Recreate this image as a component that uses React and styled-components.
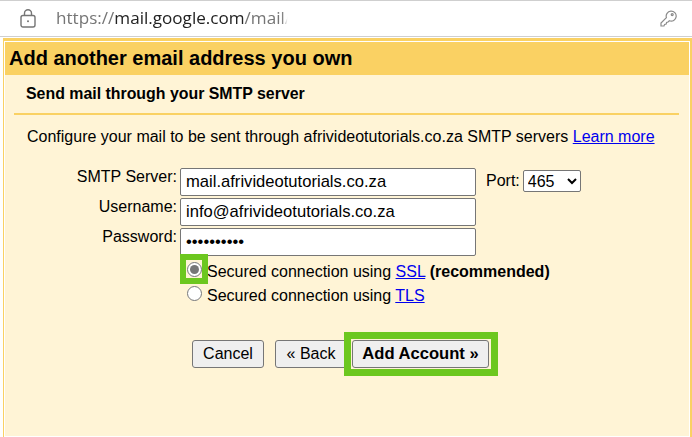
import styled, { createGlobalStyle } from "styled-components";

const Global = createGlobalStyle`
  html, body { margin: 0; padding: 0; background: #fff; }
  body { font-family: "Liberation Sans", Arial, sans-serif; color: #000; }
`;

const Page = styled.div`
  width: 692px;
  height: 437px;
  overflow: hidden;
  background: #fff;
`;

const AddressBar = styled.div`
  height: 35px;
  display: flex;
  align-items: center;
  border-top: 1px solid #cfcfcf;
  border-bottom: 1px solid #cfcfcf;
  padding: 0 15px 0 20px;
  color: #757575;
`;

const Url = styled.div`
  margin: 0 0 2px 20px;
  width: 234px;
  white-space: nowrap;
  overflow: hidden;
  font: 17.1px "Open Sans", sans-serif;
  color: #757575;
  -webkit-mask-image: linear-gradient(to right, #000 96.5%, transparent 99%);
  mask-image: linear-gradient(to right, #000 96.5%, transparent 99%);

  b { font-weight: 400; color: #222; }
`;

const KeyIcon = styled.svg`
  margin-left: auto;
`;

const Panel = styled.div`
  margin: 1px 0 0 3px;
  height: 399px;
  box-sizing: border-box;
  background: #fff4d6;
  border-style: solid;
  border-color: #fad163;
  border-width: 3px 2px 0 1px;
  box-shadow: inset 0 0 0 1px #fff;
  padding: 1px 1px 0;
`;

const Heading = styled.h1`
  margin: 0;
  height: 33px;
  padding-left: 4px;
  background: #fad163;
  font-size: 20px;
  line-height: 33px;
  font-weight: 700;
`;

const SubHeading = styled.h2`
  margin: 0 10px 0 9px;
  height: 38px;
  padding-left: 12px;
  border-bottom: 2px solid #fad163;
  font-size: 15.9px;
  line-height: 37px;
  font-weight: 700;
`;

const Intro = styled.p`
  margin: 12px 0 0 22px;
  font-size: 16px;
  line-height: 20px;

  a { color: #00e; }
`;

const Fields = styled.div`
  margin: 21px 0 0 0;
  display: grid;
  grid-template-columns: 172px 296px auto;
  column-gap: 3px;
  row-gap: 2px;
`;

const FieldLabel = styled.label`
  text-align: right;
  font-size: 16px;
  line-height: 18px;
`;

const TextInput = styled.input`
  box-sizing: border-box;
  width: 296px;
  height: 28px;
  padding: 0 5px;
  margin: 0;
  background: #fff;
  border: 1px solid #767676;
  border-radius: 2px;
  font: 16.6px "Liberation Sans", sans-serif;
  color: #000;
`;

const PortBox = styled.div`
  display: flex;
  align-items: center;
  gap: 3px;
  padding: 0 0 2px 7px;
  font-size: 16px;
`;

const PortSelect = styled.select`
  width: 58px;
  height: 22px;
  background: #fff;
  border: 1px solid #767676;
  border-radius: 2px;
  font: 16px "Liberation Sans", sans-serif;
  color: #000;
`;

const Options = styled.div`
  margin: 4px 0 0 175px;
  display: flex;
  flex-direction: column;
`;

const OptionRow = styled.label`
  display: flex;
  align-items: flex-start;
  height: 24px;
  font-size: 16px;
  line-height: 24px;

  a { color: #00e; }
`;

const RadioSpot = styled.span`
  position: relative;
  width: 15px;
  height: 15px;
  margin: 2px 5px 0 7px;
  display: flex;

  ${({ $marked }) => $marked && `
    &::after {
      content: "";
      position: absolute;
      left: -7px;
      top: -8px;
      width: 16px;
      height: 18px;
      border: 6px solid #6cc71f;
    }
  `}
`;

const Radio = styled.input`
  margin: 0;
  width: 15px;
  height: 15px;
  accent-color: #767676;
`;

const Actions = styled.div`
  margin: 32px 0 0 187px;
  display: flex;
`;

const Button = styled.button`
  box-sizing: border-box;
  height: 28px;
  padding: 0;
  width: ${({ $w }) => $w}px;
  margin-right: ${({ $gap }) => $gap}px;
  background: #efefef;
  border: 1px solid #767676;
  border-radius: 3px;
  font: ${({ $strong }) => ($strong ? "700 16.6px" : "400 16px")} "Liberation Sans", sans-serif;
  color: #000;
`;

const MarkedWrap = styled.div`
  position: relative;

  &::after {
    content: "";
    position: absolute;
    left: -8px;
    top: -8px;
    width: 140px;
    height: 30px;
    border: 7px solid #6cc71f;
  }
`;

export default function App() {
  return (
    <Page>
      <Global />
      <AddressBar>
        <svg width="16" height="19" viewBox="0 0 16 19" fill="none" stroke="#757575" strokeWidth="1.4">
          <rect x="1" y="6.5" width="14" height="11.5" rx="2" />
          <path d="M4.5 6.5V4.2a3.5 3.5 0 0 1 7 0v2.3" />
          <circle cx="8" cy="12.2" r="1" fill="#757575" stroke="none" />
        </svg>
        <Url>https://<b>mail.google.com</b>/mail/</Url>
        <KeyIcon width="17" height="17" viewBox="0 0 17 17" fill="none" stroke="#8a8a8a" strokeWidth="1.2">
          <path d="M6.4 7.6 1 13v3h3l.6-1.6 1.6-.4.4-1.6 1.4-.4 1.4-1.2a5 5 0 1 0-3-3.2Z" />
          <circle cx="12.2" cy="4.6" r="1" />
        </KeyIcon>
      </AddressBar>
      <Panel>
        <Heading>Add another email address you own</Heading>
        <SubHeading>Send mail through your SMTP server</SubHeading>
        <Intro>
          Configure your mail to be sent through afrivideotutorials.co.za SMTP servers <a href="#learn">Learn more</a>
        </Intro>
        <Fields>
          <FieldLabel>SMTP Server:</FieldLabel>
          <TextInput defaultValue="mail.afrivideotutorials.co.za" />
          <PortBox>
            Port:
            <PortSelect defaultValue="465">
              <option>465</option>
              <option>587</option>
            </PortSelect>
          </PortBox>
          <FieldLabel>Username:</FieldLabel>
          <TextInput defaultValue="info@afrivideotutorials.co.za" />
          <span />
          <FieldLabel>Password:</FieldLabel>
          <TextInput type="password" defaultValue="123456789a" />
          <span />
        </Fields>
        <Options>
          <OptionRow>
            <RadioSpot $marked>
              <Radio type="radio" name="security" defaultChecked />
            </RadioSpot>
            <span>Secured connection using <a href="#ssl">SSL</a> <b>(recommended)</b></span>
          </OptionRow>
          <OptionRow>
            <RadioSpot>
              <Radio type="radio" name="security" />
            </RadioSpot>
            <span>Secured connection using <a href="#tls">TLS</a></span>
          </OptionRow>
        </Options>
        <Actions>
          <Button type="button" $w={72} $gap={11}>Cancel</Button>
          <Button type="button" $w={72} $gap={5}>« Back</Button>
          <MarkedWrap>
            <Button type="button" $w={137} $gap={0} $strong>Add Account »</Button>
          </MarkedWrap>
        </Actions>
      </Panel>
    </Page>
  );
}
